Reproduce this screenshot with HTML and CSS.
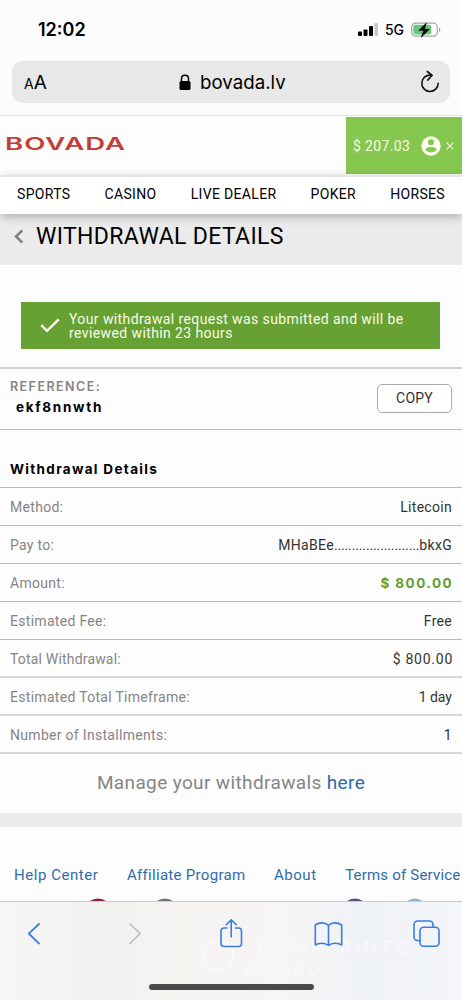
FILE: index.html
```html
<!DOCTYPE html>
<html lang="en">
<head>
<meta charset="utf-8">
<title>Withdrawal Details</title>
<link rel="stylesheet" href="styles.css">
</head>
<body>
<div class="phone">
  <div class="browser-top">
    <div class="status">
      <span class="clock">12:02</span>
      <div class="status-icons">
        <svg class="signal" width="21" height="14" viewBox="0 0 21 14"><rect x="0" y="8.5" width="4" height="4.5" rx="1"/><rect x="5.5" y="6.5" width="4" height="6.5" rx="1"/><rect x="11" y="3" width="4" height="10" rx="1"/><rect x="16.5" y="0" width="3.5" height="13" rx="1" fill="#c9c9c9"/></svg>
        <span class="network">5G</span>
        <svg class="battery" width="30" height="16" viewBox="0 0 30 16"><rect x=".7" y="1.2" width="25.6" height="13" rx="4" fill="#fff" stroke="#a5a5a5" stroke-width="1.2"/><rect x="2.3" y="2.8" width="18" height="9.8" rx="2.5" fill="#69c779"/><path d="M28 5.8v4c1.700-.5 1.700-3.500 0-4z" fill="#999"/><path d="M15.500 .8 7.600 8.500h5l-2.600 7 8.600-8.300h-5.100z" fill="#000" stroke="#000" stroke-width=".4"/></svg>
      </div>
    </div>
    <div class="address">
      <span class="reader"><small>A</small>A</span>
      <span class="site"><svg width="12" height="17" viewBox="0 0 12 17"><rect x=".5" y="7" width="11" height="9" rx="1.500"/><path d="M2.500 8V4.800C2.500.2 9.500.2 9.500 4.800V8" fill="none" stroke="#000" stroke-width="1.500"/></svg><span>bovada.lv</span></span>
      <svg class="reload" width="20" height="24" viewBox="0 0 20 24"><path d="M10.500 5.100A8.200 8.200 0 1 0 18.200 13.300M7.300 1.500l4.900 3.800-4.500 4.800" fill="none" stroke="#111" stroke-width="1.600" stroke-linecap="round" stroke-linejoin="round"/></svg>
    </div>
  </div>
  <header class="masthead">
    <div class="logo"><span>BOVADA</span></div>
    <div class="account">
      <span class="balance">$ 207.03</span>
      <svg width="20" height="20" viewBox="0 0 20 20"><circle cx="10" cy="10" r="9.700" fill="#fffff0"/><circle cx="10" cy="6.300" r="3" fill="#86c750"/><path d="M4.200 13.500c1.500-3.300 10.100-3.300 11.600 0-2.600 3.900-9 3.900-11.600 0z" fill="#86c750"/></svg>
      <svg width="8" height="8" viewBox="0 0 8 8"><path d="M.7.7l6.600 6.600M7.300.7.700 7.300" stroke="#f4fbdc" stroke-width="1.200"/></svg>
    </div>
  </header>
  <nav class="sections">
    <a>SPORTS</a><a>CASINO</a><a>LIVE DEALER</a><a>POKER</a><a>HORSES</a>
  </nav>
  <div class="page-title">
    <svg width="10" height="15" viewBox="0 0 10 15"><path d="M8.300 1.300 2 7.500l6.300 6.200" fill="none" stroke="#808080" stroke-width="2.500"/></svg>
    <h1>WITHDRAWAL DETAILS</h1>
  </div>
  <div class="notice">
    <svg width="20" height="15" viewBox="0 0 20 15"><path d="M1.300 7.200 7 12.800 18.700 1.300" fill="none" stroke="#fffff0" stroke-width="2.400"/></svg>
    <p>Your withdrawal request was submitted and will be<br>reviewed within 23 hours</p>
  </div>
  <section class="reference">
    <div><h2>REFERENCE:</h2><strong>ekf8nnwth</strong></div>
    <button>COPY</button>
  </section>
  <h3 class="details-title">Withdrawal Details</h3>
  <dl class="details">
    <div><dt>Method:</dt><dd>Litecoin</dd></div>
    <div><dt>Pay to:</dt><dd class="payee">MHaBEe<span class="dots">........................</span>bkxG</dd></div>
    <div><dt>Amount:</dt><dd class="amount">$ 800.00</dd></div>
    <div><dt>Estimated Fee:</dt><dd>Free</dd></div>
    <div><dt class="tight">Total Withdrawal:</dt><dd class="total">$ 800.00</dd></div>
    <div><dt>Estimated Total Timeframe:</dt><dd class="days">1 day</dd></div>
    <div><dt>Number of Installments:</dt><dd>1</dd></div>
  </dl>
  <p class="manage"><span>Manage your withdrawals <a>here</a></span></p>
  <footer class="site-footer">
    <div class="links"><a>Help Center</a><a class="affiliate">Affiliate Program</a><a>About</a><a class="terms">Terms of Service</a></div>
    <svg class="badges" width="462" height="3" viewBox="0 0 462 3"><circle cx="98" cy="14.500" r="14" fill="#8b2337"/><circle cx="165" cy="14.500" r="14" fill="#74756a"/><circle cx="355" cy="14.500" r="14" fill="#51507e"/><circle cx="415" cy="14.500" r="14" fill="#8db4df"/></svg>
  </footer>
  <div class="toolbar">
    <div class="watermark"><svg width="36" height="38" viewBox="0 0 36 38"><circle cx="18" cy="19" r="15" fill="none" stroke="#fff" stroke-width="3"/></svg><span><b>COMPLAINTS</b><br>BOARD</span></div>
    <svg class="icons" width="462" height="60" viewBox="0 0 462 60" fill="none" stroke="#3a7ce0" stroke-width="1.600" stroke-linecap="round" stroke-linejoin="round">
      <path d="M39.500 21.500 28.800 31.700 39.500 42" stroke-width="1.800" stroke-linecap="butt"/>
      <path d="M129.500 21.500 140 31.700 129.500 42" stroke="#bfbfc1" stroke-width="1.700" stroke-linecap="butt"/>
      <path d="M227 26h-3a3 3 0 0 0-3 3V41.500a3 3 0 0 0 3 3h14.500a3 3 0 0 0 3-3V29a3 3 0 0 0-3-3h-3M231.200 35V18M226.200 22.700l5-4.900 5 4.900"/>
      <path d="M328.500 23.500c-3.500-3.700-9.500-3.200-13.200-.5V43c3.700-2.500 9.700-2.500 13.200.5 3.500-3 9.500-3 13.200-.5V23c-3.700-2.700-9.700-3.200-13.200.5zM328.500 23.500V43.500"/>
      <path d="M420 38.500h-2.500a3.500 3.500 0 0 1-3.500-3.500V22.500a3.500 3.500 0 0 1 3.500-3.500h12a3.500 3.500 0 0 1 3.500 3.500V25"/><rect x="420" y="25.300" width="19" height="19" rx="3.500"/>
    </svg>
    <div class="home"></div>
  </div>
</div>
</body>
</html>
```
FILE: styles.css
```css
* { box-sizing: border-box; }
body { margin: 0; background: #fdfdfd; font-family: Roboto, "Liberation Sans", sans-serif; }
h1, h2, h3, p, dl, dd { margin: 0; }
svg { display: block; flex: none; }
.phone { width: 462px; height: 1000px; overflow: hidden; display: flex; flex-direction: column; white-space: nowrap; }
.phone > * { flex: none; }
.browser-top { height: 116px; border-bottom: 1px solid #e2e2e2; background: #fcfcfc; }
.status { height: 61px; padding: 0 21px 2px 38px; display: flex; align-items: center; justify-content: space-between; }
.clock { font: 600 18px Inter, sans-serif; }
.status-icons { display: flex; align-items: center; }
.network { font: 500 14px Inter, sans-serif; margin: 0 7px 0 6px; }
.address { height: 42px; margin: 0 12px; padding: 0 10px 0 12px; border-radius: 11px; background: #e8e8e8; display: flex; align-items: center; justify-content: space-between; font-family: Inter, sans-serif; }
.reader { font-size: 19px; padding-top: 1px; }
.reader small { font-size: 14px; }
.site { display: flex; align-items: center; gap: 9px; font-size: 18.700px; margin-right: 2px; }
.masthead { height: 59px; background: #fdfdfd; display: flex; justify-content: space-between; padding-top: 1px; }
.logo { padding: 15px 0 0 5px; }
.logo span { display: block; font: 600 17px/24px Inter, sans-serif; letter-spacing: .6px; color: #c33e37; transform: scaleX(1.620); transform-origin: left; }
.account { width: 116px; height: 57px; background: #86c750; color: #f7fce0; display: flex; align-items: center; padding-left: 7px; font-size: 14px; letter-spacing: .35px; }
.balance { width: 68px; }
.account svg + svg { margin-left: 5px; }
.sections { height: 39px; border-top: 2px solid #e4e4e4; background: #fff; display: flex; align-items: center; justify-content: space-between; padding: 0 17px 3px; font-size: 14px; letter-spacing: .33px; box-shadow: 0 3px 9px rgba(0,0,0,.25); position: relative; z-index: 1; }
.page-title { height: 51px; background: #ebebeb; display: flex; align-items: center; padding: 0 0 6px 14px; gap: 12px; }
h1 { font-size: 23px; font-weight: 400; letter-spacing: .35px; }
.notice { height: 47px; margin: 37px 22px 18px 21px; background: #67a133; color: #f8fde8; display: flex; align-items: center; padding-left: 19px; gap: 9px; }
.notice p { font-size: 14px; line-height: 14px; letter-spacing: .4px; }
.reference { height: 63px; border-top: 2px solid #d0d0d0; border-bottom: 1px solid #bbb; display: flex; align-items: center; justify-content: space-between; padding: 0 10px 2px; }
h2 { font: 600 12.500px/20px Inter, sans-serif; color: #858585; letter-spacing: 1.450px; margin-top: -3px; }
.reference strong { display: block; font: 700 13.500px/20px Inter, sans-serif; padding-left: 6px; letter-spacing: 1.700px; }
button { width: 75px; height: 29px; border: 1px solid #aaa; border-radius: 5px; background: #fff; color: #333; font: 14px Roboto, sans-serif; letter-spacing: .2px; }
.details-title { height: 58px; border-bottom: 1px solid #bbb; padding: 27px 10px 0; font: 700 13.500px/24px Inter, sans-serif; letter-spacing: 1.320px; }
.details > div { height: 38px; border-bottom: 1px solid #bbb; padding: 0 10px; display: flex; align-items: center; justify-content: space-between; font-size: 14px; letter-spacing: .3px; }
.details > div:nth-child(n+5) { border-bottom: 2px solid #d6d6d6; padding-top: 1px; }
dt { color: #858585; }
dt.tight { letter-spacing: .18px; }
dd { color: #333; }
.payee .dots { letter-spacing: -.130px; }
.total { letter-spacing: .75px; margin-right: -1px; }
.days { letter-spacing: 0; }
dd.amount { color: #619f31; font: 700 13.500px Inter, sans-serif; letter-spacing: 1.450px; margin-right: -1px; }
.manage { height: 59px; padding-bottom: 2px; display: flex; align-items: center; justify-content: center; font-size: 19px; letter-spacing: .37px; color: #858585; }
a { color: inherit; }
.manage a { color: #2d69ae; }
.site-footer { height: 88px; border-top: 14px solid #ebebeb; display: flex; flex-direction: column; justify-content: space-between; background: #fdfdfd; }
.links { display: flex; padding: 36px 0 0 14px; gap: 28.500px; color: #316baa; font-size: 15px; line-height: 24px; letter-spacing: .55px; }
.links .affiliate { letter-spacing: .3px; }
.links .terms { letter-spacing: .2px; }
.toolbar { height: 99px; border-top: 1px solid #ccc; position: relative; background: linear-gradient(90deg, #f6f6f6, #f1f1f0 22%, #f5f4f1 37%, #f7f5f5 60%, #eff2f6 80%, #f4f6f8); }
.icons { position: relative; }
.watermark { position: absolute; left: 200px; top: 35px; display: flex; gap: 9px; font: 600 19px/22px Inter, sans-serif; letter-spacing: 2.500px; color: #fff; opacity: .35; }
.watermark b { font-weight: 600; padding-left: 12px; }
.home { width: 165px; height: 6px; margin: 22px 0 0 149px; border-radius: 3px; background: #4a4a4a; position: relative; }
```
